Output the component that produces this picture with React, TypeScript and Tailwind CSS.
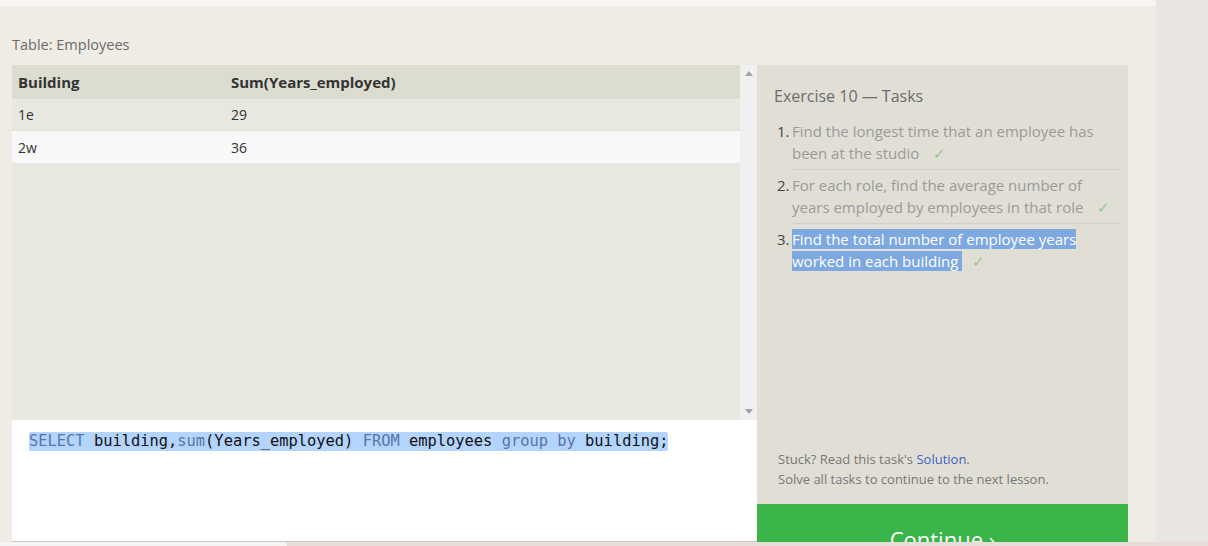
import React from "react";

const ui = { fontFamily: '"Open Sans", "Noto Sans", sans-serif' };
const mono = { fontFamily: '"DejaVu Sans Mono", "Liberation Mono", monospace' };

function Check() {
  return <span className="ml-[10px] text-[#8fc98f]">✓</span>;
}

export default function App() {
  return (
    <div className="w-[1208px] h-[546px] overflow-hidden flex flex-col" style={ui}>
      <div className="flex h-[542px]">
        <div className="w-[1156px] bg-[#efece6] flex flex-col">
          <div className="h-[6px] bg-[#f8f5f2]" />
          <div className="h-[59px] pl-[12px] pt-[29px] text-[14.5px] leading-[20px] text-[#6b6b6b]">
            Table: Employees
          </div>
          <div className="flex flex-1 pl-[12px]">
            <div className="w-[745px] flex flex-col">
              <div className="h-[355px] flex">
                <div className="w-[728px] bg-[#e9e8e0] flex flex-col">
                  <div className="h-[34px] bg-[#dcdcd0] flex items-center text-[15px] font-bold text-[#333]">
                    <div className="w-[219px] pl-[6px]">Building</div>
                    <div>Sum(Years_employed)</div>
                  </div>
                  <div className="h-[32px] bg-[#e9e8e0] flex items-center text-[14px] text-[#333] border-b border-[#e2e1da]">
                    <div className="w-[219px] pl-[6px]">1e</div>
                    <div>29</div>
                  </div>
                  <div className="h-[32px] bg-[#f8f8f8] flex items-center text-[14px] text-[#333]">
                    <div className="w-[219px] pl-[6px]">2w</div>
                    <div>36</div>
                  </div>
                </div>
                <div className="w-[17px] bg-[#f0f0f0] flex flex-col items-center justify-between py-[6px]">
                  <svg width="8" height="5" viewBox="0 0 8 5"><path d="M0 5 L4 0 L8 5 Z" fill="#a3a3a3" /></svg>
                  <svg width="8" height="5" viewBox="0 0 8 5"><path d="M0 0 L4 5 L8 0 Z" fill="#a3a3a3" /></svg>
                </div>
              </div>
              <div className="flex-1 bg-white pl-[17px] pt-[8px] border-b border-[#c8c8c8]">
                <span className="bg-[#b3d4fc] text-[15.4px] leading-[19px] text-[#111] inline-block rounded-[2px]" style={mono}>
                  <span className="text-[#5a75a8]">SELECT</span> building,<span className="text-[#5a75a8]">sum</span>(Years_employed) <span className="text-[#5a75a8]">FROM</span> employees <span className="text-[#5a75a8]">group</span> <span className="text-[#5a75a8]">by</span> building;
                </span>
              </div>
            </div>
            <div className="w-[371px] flex flex-col">
              <div className="flex-1 bg-[#e1dfd5] pl-[17px] pr-[8px] pt-[21px] flex flex-col">
                <div className="text-[16px] leading-[20px] text-[#6b6b6b]">Exercise 10 — Tasks</div>
                <ol className="mt-[14px] text-[15px] leading-[22px] text-[#9a9a9a]">
                  <li className="flex">
                    <span className="w-[18px] pl-[3px] text-[#444]">1.</span>
                    <div className="flex-1 pb-[5px] border-b border-[#d2d0c6]">
                      Find the longest time that an employee has<br />been at the studio <Check />
                    </div>
                  </li>
                  <li className="flex mt-[4px]">
                    <span className="w-[18px] pl-[3px] text-[#444]">2.</span>
                    <div className="flex-1 pb-[5px] border-b border-[#d2d0c6]">
                      For each role, find the average number of<br />years employed by employees in that role <Check />
                    </div>
                  </li>
                  <li className="flex mt-[4px]">
                    <span className="w-[18px] pl-[3px] text-[#444]">3.</span>
                    <div className="flex-1">
                      <span className="bg-[#7ea8e0] text-white">Find the total number of employee years</span>
                      <br />
                      <span className="bg-[#7ea8e0] text-white">worked in each building </span>
                      <Check />
                    </div>
                  </li>
                </ol>
                <div className="mt-auto pb-[15px] pl-[4px] text-[13px] leading-[20px] text-[#777]">
                  <div>
                    Stuck? Read this task's <span className="text-[#3d5fc4]">Solution</span>.
                  </div>
                  <div>Solve all tasks to continue to the next lesson.</div>
                </div>
              </div>
              <div className="h-[38px] bg-[#39b54a] flex justify-center overflow-hidden">
                <span className="text-white text-[22px] leading-[30px] mt-[20px]">Continue ›</span>
              </div>
            </div>
          </div>
        </div>
        <div className="flex-1 bg-[#e9e5e2]" />
      </div>
      <div className="h-[4px] flex">
        <div className="w-[287px] bg-[#f6f4f2]" />
        <div className="flex-1 bg-[#e8dcd8]" />
      </div>
    </div>
  );
}
